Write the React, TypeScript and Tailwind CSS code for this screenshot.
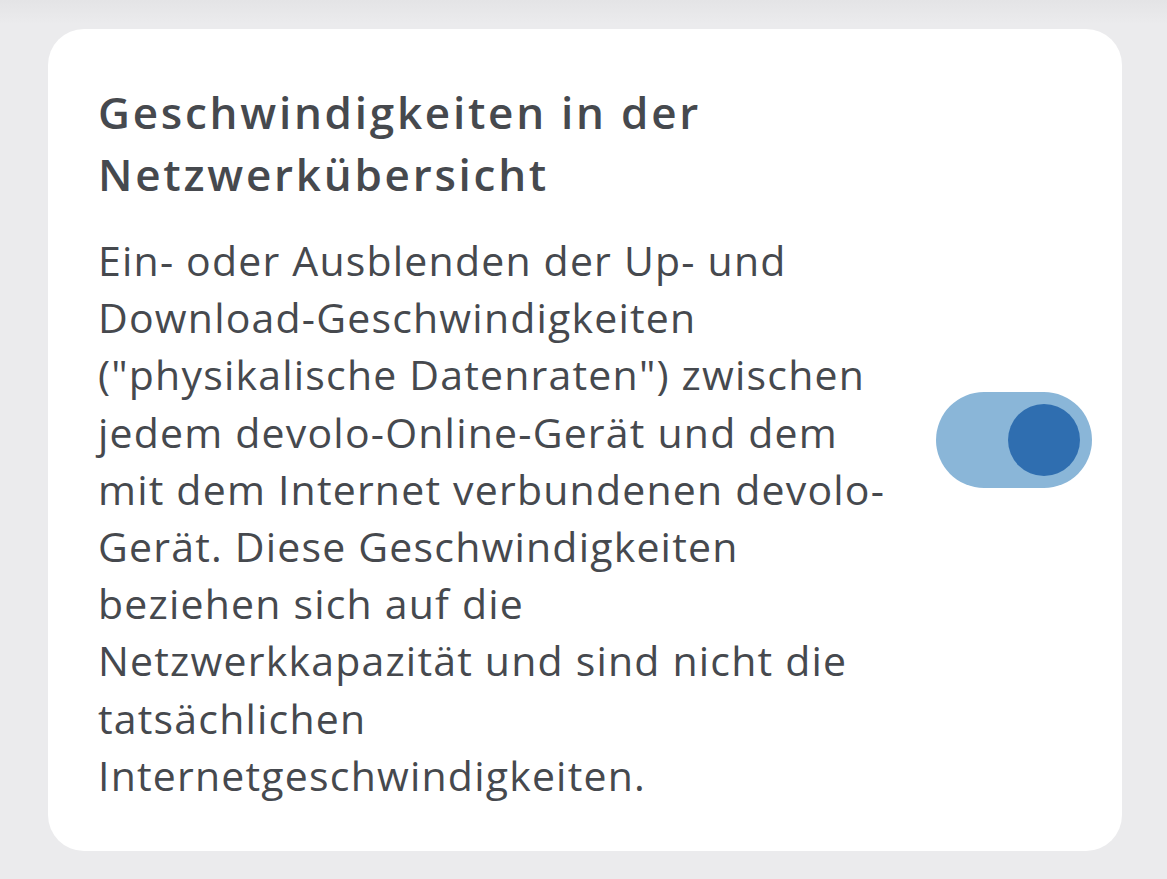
import React from "react";

const lines = [
  "Ein- oder Ausblenden der Up- und",
  "Download-Geschwindigkeiten",
  "(\"physikalische Datenraten\") zwischen",
  "jedem devolo-Online-Gerät und dem",
  "mit dem Internet verbundenen devolo-",
  "Gerät. Diese Geschwindigkeiten",
  "beziehen sich auf die",
  "Netzwerkkapazität und sind nicht die",
  "tatsächlichen",
  "Internetgeschwindigkeiten.",
];

export default function App() {
  return (
    <div
      className="w-[1167px] h-[879px] bg-[#ebebed] bg-gradient-to-b from-[#e4e4e6] to-[#ebebed] bg-[length:100%_24px] bg-no-repeat pt-[29px] pl-[48px] pr-[45px] text-[#46494e]"
      style={{ fontFamily: '"Open Sans", "Noto Sans", sans-serif' }}
    >
      <div className="bg-white rounded-[36px] h-[822px] pl-[50px] pr-[30px] flex items-center justify-between">
        <div className="self-start pt-[52px]">
          <h1 className="text-[44px] leading-[62px] font-semibold tracking-[2.75px]">
            <span className="block">Geschwindigkeiten in der</span>
            <span className="block">Netzwerkübersicht</span>
          </h1>
          <div className="mt-[27px] text-[41px] leading-[57.2px] tracking-[1.2px]">
            {lines.map((l) => (
              <span key={l} className="block whitespace-nowrap">
                {l}
              </span>
            ))}
          </div>
        </div>
        <div className="w-[156px] h-[96px] rounded-full bg-[#8ab6d8] flex items-center justify-end pr-[12px]">
          <div className="w-[72px] h-[72px] rounded-full bg-[#2f6eb0]" />
        </div>
      </div>
    </div>
  );
}
